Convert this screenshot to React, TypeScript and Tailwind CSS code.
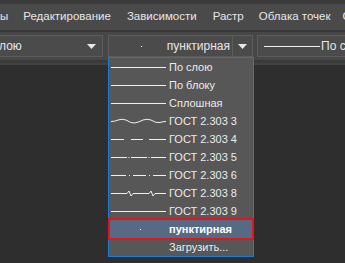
import React from "react";

const F = { fontFamily: '"Liberation Sans", Arial, sans-serif' };

function Line({ kind }: { kind: string }) {
  const s = "#f0f0f0";
  let content: React.ReactNode = null;
  if (kind === "solid") content = <line x1="0" y1="9.5" x2="55" y2="9.5" stroke={s} strokeWidth="1" />;
  else if (kind === "wave")
    content = (
      <path d="M0 9.5 Q4 9.5 7 8 Q11 6.5 15 8 Q20 11.5 24 11 Q28 10 32 8 Q36 6.5 40 8 Q45 11.5 49 10.5 Q52 9.5 55 9.5" fill="none" stroke={s} strokeWidth="1" />
    );
  else if (kind === "dash")
    content = (
      <g stroke={s} strokeWidth="1">
        <line x1="0" y1="9.5" x2="13" y2="9.5" />
        <line x1="20" y1="9.5" x2="32" y2="9.5" />
        <line x1="38" y1="9.5" x2="55" y2="9.5" />
      </g>
    );
  else if (kind === "dashdot")
    content = (
      <g stroke={s} strokeWidth="1">
        <line x1="0" y1="9.5" x2="16" y2="9.5" />
        <line x1="17.5" y1="9.5" x2="18.5" y2="9.5" />
        <line x1="20" y1="9.5" x2="36" y2="9.5" />
        <line x1="37.5" y1="9.5" x2="38.5" y2="9.5" />
        <line x1="40" y1="9.5" x2="55" y2="9.5" />
      </g>
    );
  else if (kind === "dashdotdot")
    content = (
      <g stroke={s} strokeWidth="1">
        <line x1="0" y1="9.5" x2="15" y2="9.5" />
        <line x1="18" y1="9.5" x2="19" y2="9.5" />
        <line x1="22" y1="9.5" x2="35" y2="9.5" />
        <line x1="38" y1="9.5" x2="39" y2="9.5" />
        <line x1="42" y1="9.5" x2="55" y2="9.5" />
      </g>
    );
  else if (kind === "break")
    content = (
      <path d="M0 9.5 H16 L18 7 L20 12 L22 9.5 H38 L40 7 L42 12 L44 9.5 H55" fill="none" stroke={s} strokeWidth="1" />
    );
  else if (kind === "dot") content = <rect x="29" y="9" width="1" height="1" fill={s} />;
  return (
    <svg width="56" height="18" viewBox="0 0 56 18" className="shrink-0">
      {content}
    </svg>
  );
}

const items: { kind: string; label: string }[] = [
  { kind: "solid", label: "По слою" },
  { kind: "solid", label: "По блоку" },
  { kind: "solid", label: "Сплошная" },
  { kind: "wave", label: "ГОСТ 2.303 3" },
  { kind: "dash", label: "ГОСТ 2.303 4" },
  { kind: "dashdot", label: "ГОСТ 2.303 5" },
  { kind: "dashdotdot", label: "ГОСТ 2.303 6" },
  { kind: "break", label: "ГОСТ 2.303 8" },
  { kind: "solid", label: "ГОСТ 2.303 9" },
];

function Arrow() {
  return (
    <svg width="9" height="5" viewBox="0 0 9 5" className="shrink-0">
      <path d="M0 0 H9 L4.5 5 Z" fill="#e8e8e8" />
    </svg>
  );
}

export default function App() {
  return (
    <div className="relative w-[345px] h-[263px] overflow-hidden bg-[#2e2e2e] text-[#e6e6e6]" style={F}>
      <div className="h-[4px] bg-[#3b3b3b]" />
      <div className="h-[26px] bg-[#4a4a4a] flex items-center text-[11.5px] whitespace-nowrap overflow-hidden">
        <span className="shrink-0">ы</span>
        <span className="ml-[15px] shrink-0">Редактирование</span>
        <span className="ml-[16px] shrink-0">Зависимости</span>
        <span className="ml-[16px] shrink-0">Растр</span>
        <span className="ml-[15px] shrink-0">Облака точек</span>
        <span className="ml-[12px] shrink-0">С</span>
      </div>
      <div className="h-[2px] bg-[#383838]" />
      <div className="h-[28px] bg-[#474747] flex items-start pt-[3px] text-[12px] overflow-hidden">
        <div className="shrink-0 w-[103px] h-[22px] border border-[#5c5c5c] border-l-0 bg-[#4b4b4b] flex items-center justify-between pr-[6px]">
          <span className="-ml-[1px]">лою</span>
          <Arrow />
        </div>
        <div className="shrink-0 ml-[5px] w-[145px] h-[22px] flex">
          <div className="w-[125px] h-[22px] border border-[#5c5c5c] bg-[#4b4b4b] flex items-center justify-end pr-[2px] relative">
            <span className="absolute left-[32px] top-[10px] w-[1px] h-[1px] bg-white" />
            <span>пунктирная</span>
          </div>
          <div className="w-[20px] h-[22px] border border-[#5c5c5c] border-l-0 bg-[#4b4b4b] flex items-center justify-center">
            <Arrow />
          </div>
        </div>
        <div className="shrink-0 ml-[4px] w-[100px] h-[22px] border border-[#5c5c5c] border-r-0 bg-[#4b4b4b] flex items-center pl-[6px] whitespace-nowrap">
          <span className="shrink-0 w-[56px] h-[1px] bg-[#f0f0f0]" />
          <span className="ml-[1px]">По слою</span>
        </div>
      </div>
      <div className="h-[3px] bg-[#3a3a3a]" />
      <div className="h-[2px] bg-[#424242]" />

      <div className="absolute left-[108px] top-[57px] w-[146px] h-[200px] border border-[#1a7ad4] bg-[#575757] text-[11px] text-[#ececec]">
        {items.map((it) => (
          <div key={it.label} className="h-[18px] flex items-center pl-[2px]">
            <Line kind={it.kind} />
            <span className="ml-[2px] whitespace-nowrap">{it.label}</span>
          </div>
        ))}
        <div className="relative h-[18px] flex items-center pl-[2px] bg-[#566a84]">
          <Line kind="dot" />
          <span className="ml-[2px] font-bold text-white">пунктирная</span>
          <div className="absolute -left-[1px] -right-[1px] -top-[2px] -bottom-[2px] border-2 border-[#e4141c]" />
        </div>
        <div className="h-[18px] flex items-center pl-[60px]">Загрузить...</div>
      </div>
    </div>
  );
}
